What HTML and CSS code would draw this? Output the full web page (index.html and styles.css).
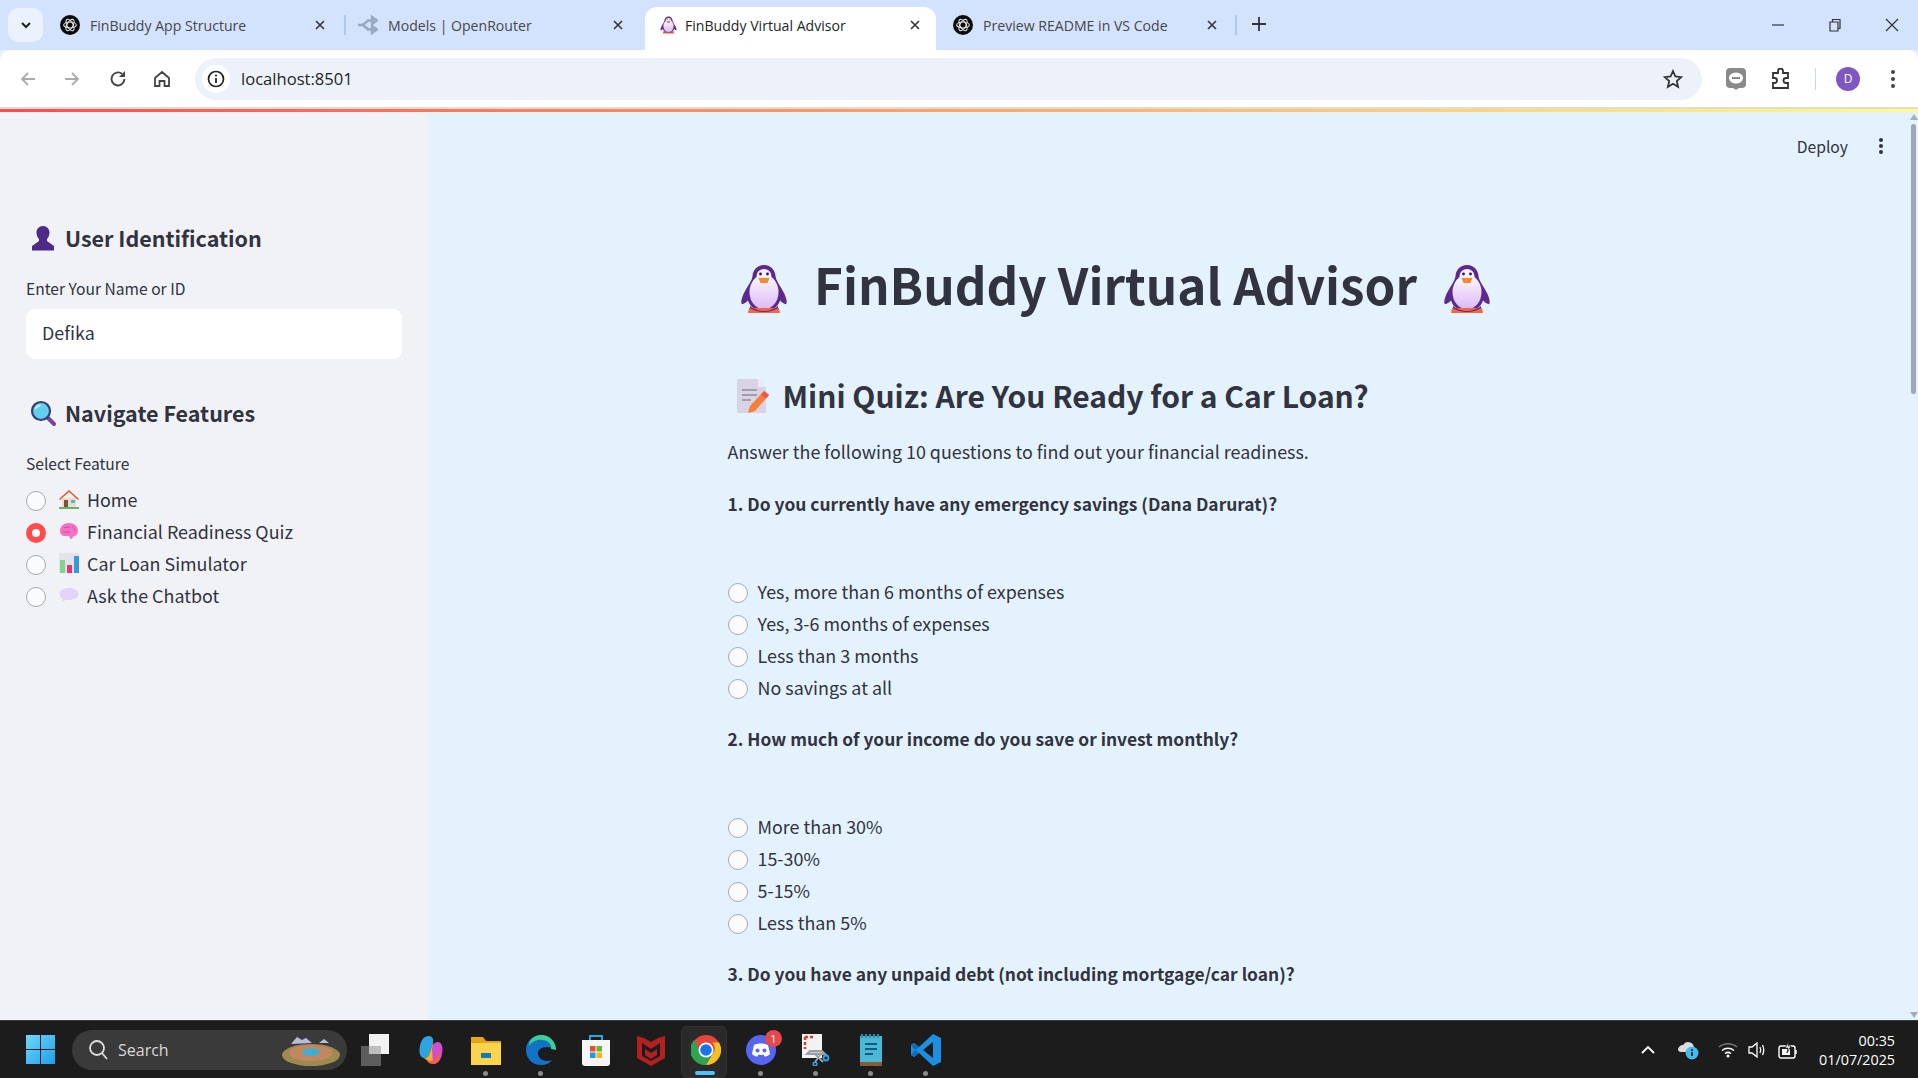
FILE: index.html
```html
<!DOCTYPE html>
<html lang="en">
<head>
    <meta charset="UTF-8">
    <meta name="viewport" content="width=device-width, initial-scale=1.0">
    <title>FinBuddy Virtual Advisor</title>
    <link rel="stylesheet" href="styles.css">
</head>
<body>
    <svg class="defs" width="0" height="0">
        <defs>
            <linearGradient id="win" x1="0" y1="0" x2="1" y2="1">
                <stop offset="0" stop-color="#6fd8fb"/>
                <stop offset="1" stop-color="#1e9fe8"/>
            </linearGradient>
            <linearGradient id="belly" x1="0" y1="0" x2="0" y2="1">
                <stop offset="0" stop-color="#fdfaff"/>
                <stop offset="1" stop-color="#dcb9f7"/>
            </linearGradient>
            <symbol id="gpt" viewBox="0 0 20 20">
                <circle cx="10" cy="10" r="10" fill="#0b0b0b"/>
                <g fill="none" stroke="#e8e8e8" stroke-width="1.1">
                    <ellipse cx="10" cy="10" rx="6.3" ry="3"/>
                    <ellipse cx="10" cy="10" rx="6.3" ry="3" transform="rotate(60 10 10)"/>
                    <ellipse cx="10" cy="10" rx="6.3" ry="3" transform="rotate(120 10 10)"/>
                </g>
            </symbol>
            <symbol id="penguin" viewBox="0 0 48 48">
                <path d="M24 0c-7 0-11 5-11.500 11C12 16 8 20 4 28c-2.500 5-3.500 10-2 11 1 .6 3.500-1 6-3.500C10 42 16 46 24 46s14-4 16-10.500c2.500 2.500 5 4.100 6 3.500 1.500-1 .5-6-2-11-4-8-8-12-8.500-17C35 5 31 0 24 0z" fill="#5b2a8c"/>
                <ellipse cx="24" cy="27" rx="14.500" ry="17.500" fill="url(#belly)"/>
                <ellipse cx="24" cy="11" rx="7.500" ry="7" fill="#f7effd"/>
                <circle cx="20.500" cy="9" r="1.400" fill="#2b1a3d"/>
                <circle cx="27.500" cy="9" r="1.400" fill="#2b1a3d"/>
                <path d="M18.500 13h11l-2 5h-7z" fill="#f58a2c"/>
                <path d="M9 43h30l1 5H8z" fill="#f4683c"/>
                <path d="M10 41c4 3.500 9 5 14 5s10-1.500 14-5v2c-4 2.500-9 4-14 4s-10-1.500-14-4z" fill="#5b2a8c"/>
            </symbol>
            <symbol id="close" viewBox="0 0 10 10">
                <path d="M1 1l8 8M9 1L1 9" stroke="#333" stroke-width="1.600"/>
            </symbol>
        </defs>
    </svg>

    <div class="tabstrip">
        <button class="tab-search">
            <svg width="14" height="14" viewBox="0 0 14 14"><path d="M3 5l4 4 4-4" fill="none" stroke="#1f1f1f" stroke-width="2"/></svg>
        </button>
        <div class="tab tab-first">
            <svg class="favicon" width="20" height="20"><use href="#gpt"/></svg>
            <span class="tab-title">FinBuddy App Structure</span>
            <svg class="tab-close" width="10" height="10"><use href="#close"/></svg>
        </div>
        <span class="tab-sep"></span>
        <div class="tab tab-second">
            <svg class="favicon" width="21" height="20" viewBox="0 0 21 20"><path d="M1 10h5l5-4.500h4M6 10l5 4.500h4M15 2l5 3.500-5 3.500zM15 11l5 3.500-5 3.500z" fill="#9aa9bd" stroke="#9aa9bd" stroke-width="2.400"/></svg>
            <span class="tab-title">Models | OpenRouter</span>
            <svg class="tab-close" width="10" height="10"><use href="#close"/></svg>
        </div>
        <div class="tab tab-active">
            <svg class="favicon" width="17" height="20"><use href="#penguin"/></svg>
            <span class="tab-title">FinBuddy Virtual Advisor</span>
            <svg class="tab-close" width="10" height="10"><use href="#close"/></svg>
        </div>
        <div class="tab tab-fourth">
            <svg class="favicon" width="20" height="20"><use href="#gpt"/></svg>
            <span class="tab-title">Preview README in VS Code</span>
            <svg class="tab-close" width="10" height="10"><use href="#close"/></svg>
        </div>
        <span class="tab-sep"></span>
        <svg class="tab-new" width="16" height="16" viewBox="0 0 16 16"><path d="M8 1v14M1 8h14" stroke="#333" stroke-width="1.800"/></svg>
        <div class="window-controls">
            <svg width="14" height="14" viewBox="0 0 14 14"><path d="M1 7h12" stroke="#333" stroke-width="1.200"/></svg>
            <svg width="14" height="14" viewBox="0 0 14 14"><path d="M2 4h8v9H2zM4.500 4V1.500h7.500v9H10" fill="none" stroke="#333" stroke-width="1.200"/></svg>
            <svg width="14" height="14" viewBox="0 0 14 14"><path d="M1 1l12 12M13 1L1 13" stroke="#333" stroke-width="1.200"/></svg>
        </div>
    </div>

    <div class="toolbar">
        <svg class="nav-icon nav-back" width="18" height="18" viewBox="0 0 18 18"><path d="M16 9H3M9 3L3 9l6 6" fill="none" stroke="#a9abae" stroke-width="1.800"/></svg>
        <svg class="nav-icon nav-forward" width="18" height="18" viewBox="0 0 18 18"><path d="M2 9h13M9 3l6 6-6 6" fill="none" stroke="#a9abae" stroke-width="1.800"/></svg>
        <svg class="nav-icon nav-reload" width="18" height="18" viewBox="0 0 18 18"><path d="M15.500 9A6.500 6.500 0 1 1 13 3.800" fill="none" stroke="#444" stroke-width="1.900"/><path d="M16 1v6h-6z" fill="#444"/></svg>
        <svg class="nav-icon nav-home" width="18" height="18" viewBox="0 0 18 18"><path d="M2 8l7-6 7 6v8h-4.500v-5h-5v5H2z" fill="none" stroke="#444" stroke-width="1.800"/></svg>
        <div class="omnibox">
            <span class="site-info">
                <svg width="18" height="18" viewBox="0 0 18 18"><circle cx="9" cy="9" r="7.500" fill="none" stroke="#222" stroke-width="1.700"/><path d="M9 8v5" stroke="#222" stroke-width="1.800"/><circle cx="9" cy="5.500" r="1.100" fill="#222"/></svg>
            </span>
            <span class="url">localhost:8501</span>
            <svg class="star" width="20" height="20" viewBox="0 0 20 20"><path d="M10 2l2.400 5.500 5.800.6-4.400 3.900 1.300 5.800L10 14.800l-5.100 3 1.300-5.800-4.400-3.900 5.800-.6z" fill="none" stroke="#333" stroke-width="1.800"/></svg>
        </div>
        <svg class="ext-line" width="20" height="22" viewBox="0 0 20 22"><path d="M4 0h12a4 4 0 0 1 4 4v12a4 4 0 0 1-4 4h-3l-3 2-3-2H4a4 4 0 0 1-4-4V4a4 4 0 0 1 4-4z" fill="#8a8a8a"/><ellipse cx="10" cy="10" rx="7" ry="5.500" fill="#fff"/><path d="M6 10h8" stroke="#8a8a8a" stroke-width="2"/></svg>
        <svg class="ext-puzzle" width="20" height="22" viewBox="0 0 20 22"><path d="M2 5h5V3a2.500 2.500 0 0 1 5 0v2h5v5h-2a2.500 2.500 0 0 0 0 5h2v5H2v-5h1.500a2.500 2.500 0 0 0 0-5H2z" fill="none" stroke="#333" stroke-width="1.800"/></svg>
        <span class="toolbar-sep"></span>
        <span class="avatar">D</span>
        <svg class="menu-dots" width="4" height="18" viewBox="0 0 4 18"><circle cx="2" cy="2" r="2" fill="#444"/><circle cx="2" cy="9" r="2" fill="#444"/><circle cx="2" cy="16" r="2" fill="#444"/></svg>
    </div>
    <div class="deco-line"></div>

    <div class="app">
        <aside class="sidebar">
            <h3 class="side-title">
                <svg class="side-emoji" width="26" height="26" viewBox="0 0 26 26"><path d="M13 1c-4 0-6.500 3-6.500 6.500 0 2.500 1 5 2.500 6.500v2L2 21v4.500h22V21l-7-5v-2c1.500-1.500 2.500-4 2.500-6.500C19.500 4 17 1 13 1z" fill="#4c2a85"/></svg>
                User Identification
            </h3>
            <label class="field-label" for="name">Enter Your Name or ID</label>
            <input class="name-input" id="name" type="text" value="Defika">

            <h3 class="side-title side-title-nav">
                <svg class="side-emoji" width="26" height="26" viewBox="0 0 26 26"><path d="M17 17l7 7" stroke="#7a4595" stroke-width="4" stroke-linecap="round"/><circle cx="11" cy="11" r="9" fill="#5fd0ee" stroke="#3a3f78" stroke-width="2.200"/><path d="M5.500 9c1-2.500 3-3.500 5-3.500" fill="none" stroke="#c4f0fb" stroke-width="1.800"/></svg>
                Navigate Features
            </h3>
            <div class="field-label field-label-nav">Select Feature</div>
            <div class="radio-list">
                <div class="radio-row">
                    <span class="radio"></span>
                    <svg class="row-emoji" width="20" height="20" viewBox="0 0 20 20"><path d="M3 9h14v9H3z" fill="#efdcc6"/><path d="M0 10L10 1l10 9-1 1-9-8-9 8z" fill="#e2572b"/><path d="M5 11h4v7H5z" fill="#7a5443"/><path d="M12 11h4v3h-4z" fill="#4db3e6"/><path d="M0 18h20v2H0z" fill="#58b96a"/></svg>
                    <span>Home</span>
                </div>
                <div class="radio-row">
                    <span class="radio radio-on"></span>
                    <svg class="row-emoji" width="20" height="20" viewBox="0 0 20 20"><path d="M1 10c0-5 4-8 9-8 5 0 9 3 9 8 0 3-2 5-4 5-1 0-1 3-3 3-1 0-1-2-2-3H6c-3 0-5-2-5-5z" fill="#f472c4"/><path d="M5 7c2-2 4 0 6-1M4 11c2-1 4 1 7 0M13 5c1 2 3 2 3 5" fill="none" stroke="#c84a9f" stroke-width="1"/></svg>
                    <span>Financial Readiness Quiz</span>
                </div>
                <div class="radio-row">
                    <span class="radio"></span>
                    <svg class="row-emoji" width="20" height="20" viewBox="0 0 20 20"><path d="M0 0h20v20H0z" fill="#e3e1ea"/><path d="M1 7h5v13H1z" fill="#7cd68c"/><path d="M8 12h5v8H8z" fill="#e8356f"/><path d="M15 3h5v17h-5z" fill="#3a97dd"/></svg>
                    <span>Car Loan Simulator</span>
                </div>
                <div class="radio-row">
                    <span class="radio"></span>
                    <svg class="row-emoji" width="20" height="20" viewBox="0 0 20 20"><path d="M10 3c5.500 0 9.500 2.500 9.500 6s-4 6-9.500 6c-1 0-2-.1-3-.3L3 17l.8-3.500C1.500 12.500.5 11 .5 9 .5 5.500 4.500 3 10 3z" fill="#e2d4f7"/></svg>
                    <span>Ask the Chatbot</span>
                </div>
            </div>
        </aside>

        <main class="main">
            <div class="main-head">
                <span class="deploy">Deploy</span>
                <svg width="4" height="16" viewBox="0 0 4 16"><circle cx="2" cy="2" r="2" fill="#31333f"/><circle cx="2" cy="8" r="2" fill="#31333f"/><circle cx="2" cy="14" r="2" fill="#31333f"/></svg>
            </div>
            <div class="content">
                <h1 class="page-title">
                    <svg width="48" height="48"><use href="#penguin"/></svg>
                    <span>FinBuddy Virtual Advisor</span>
                    <svg width="48" height="48"><use href="#penguin"/></svg>
                </h1>
                <h2 class="quiz-title">
                    <svg width="33" height="35" viewBox="0 0 33 35"><path d="M1 1h21l8 8v26H1z" fill="#d9d3e6"/><path d="M22 1l8 8h-8z" fill="#efeaf5"/><path d="M6 12h15M6 17h15M6 22h9" stroke="#8f8a9c" stroke-width="1.500"/><path d="M28 13l5 4-14 16-7 2 2-7z" fill="#f4803a"/><path d="M28 13l5 4-3 3.500-5-4z" fill="#f0554d"/></svg>
                    Mini Quiz: Are You Ready for a Car Loan?
                </h2>
                <p class="intro">Answer the following 10 questions to find out your financial readiness.</p>

                <div class="question">1. Do you currently have any emergency savings (Dana Darurat)?</div>
                <div class="radio-list options">
                    <div class="radio-row"><span class="radio"></span><span>Yes, more than 6 months of expenses</span></div>
                    <div class="radio-row"><span class="radio"></span><span>Yes, 3-6 months of expenses</span></div>
                    <div class="radio-row"><span class="radio"></span><span>Less than 3 months</span></div>
                    <div class="radio-row"><span class="radio"></span><span>No savings at all</span></div>
                </div>

                <div class="question">2. How much of your income do you save or invest monthly?</div>
                <div class="radio-list options">
                    <div class="radio-row"><span class="radio"></span><span>More than 30%</span></div>
                    <div class="radio-row"><span class="radio"></span><span>15-30%</span></div>
                    <div class="radio-row"><span class="radio"></span><span>5-15%</span></div>
                    <div class="radio-row"><span class="radio"></span><span>Less than 5%</span></div>
                </div>

                <div class="question">3. Do you have any unpaid debt (not including mortgage/car loan)?</div>
            </div>
        </main>

        <div class="scrollbar">
            <span class="arrow-up"></span>
            <span class="thumb"></span>
            <span class="arrow-down"></span>
        </div>
    </div>

    <footer class="taskbar">
        <svg class="start" width="29" height="29" viewBox="0 0 30 30"><path d="M0 0h14.500v14.500H0zM15.500 0H30v14.500H15.500zM0 15.500h14.500V30H0zM15.500 15.500H30V30H15.500z" fill="url(#win)"/></svg>
        <div class="search-pill">
            <svg width="20" height="22" viewBox="0 0 20 22"><circle cx="9" cy="9" r="7" fill="none" stroke="#ddd" stroke-width="1.800"/><path d="M14 14l5 6" stroke="#ddd" stroke-width="1.800"/></svg>
            <span>Search</span>
            <svg class="search-art" width="60" height="32" viewBox="0 0 60 32"><path d="M10 10l6-7 5 3 4-2 6 5zM38 9l5-4 5 4z" fill="#b7bdd8"/><ellipse cx="30" cy="21" rx="29" ry="11" fill="#9c8a4f"/><ellipse cx="30" cy="19" rx="22" ry="8" fill="#c08760"/><ellipse cx="30" cy="18" rx="9" ry="3.500" fill="#36b0dc"/></svg>
        </div>
        <div class="task-icons">
            <div class="task-icon">
                <svg width="30" height="32" viewBox="0 0 30 32"><path d="M0 12h20v20H0z" fill="#5d5d5d"/><path d="M8 0h20v20H8z" fill="#f2f2f2"/><path d="M8 12h12v8H8z" fill="#bdbdbd"/></svg>
            </div>
            <div class="task-icon">
                <svg width="28" height="30" viewBox="0 0 28 30"><path d="M12 1c-5 0-8 4-9 10-1 5-1 11 4 12 3 .5 5-2 6-6l3-9c1-4-1-7-4-7z" fill="#2fa4e0"/><path d="M7 23c3 .5 5-2 6-6l3-9 4 14c-3 6-9 5-13 1z" fill="#f4b32c"/><path d="M16 29c5 0 8-4 9-10 1-5 1-11-4-12-3-.5-5 2-6 6z" fill="#d14dce"/><path d="M16 29c-3 0-6-2-7-5 4 3 9 3 11-3l4-3c-1 6-3 11-8 11z" fill="#f0614a"/></svg>
            </div>
            <div class="task-icon task-open">
                <svg width="30" height="30" viewBox="0 0 30 30"><path d="M0 2h12l3 4h15v24H0z" fill="#e9a70f"/><path d="M0 8h30v22H0z" fill="#fcd34d"/><path d="M10 18h10v5H10z" fill="#0f7ac4"/></svg>
            </div>
            <div class="task-icon task-open">
                <svg width="30" height="30" viewBox="0 0 30 30"><path d="M15 0C6 0 0 7 0 15c0 9 7 15 15 15 5 0 9-2 11-5-5 2-13 1-14-6-.5-4 3-7 9-7 5 0 9 3 9 3C30 6 23 0 15 0z" fill="#1173c7"/><path d="M15 0C8 0 3 5 3 11c3-5 9-7 14-6 6 1 9 5 8 9 2 0 4 1 5 1 0-9-7-15-15-15z" fill="#3ccf91"/></svg>
            </div>
            <div class="task-icon">
                <svg width="30" height="32" viewBox="0 0 30 32"><path d="M9 8V2h12v6" fill="none" stroke="#23a9e6" stroke-width="2"/><path d="M1 6h28v23a3 3 0 0 1-3 3H4a3 3 0 0 1-3-3z" fill="#f6f6f6"/><path d="M9 12h5.500v5.500H9z" fill="#e8502a"/><path d="M15.500 12H21v5.500h-5.500z" fill="#6cb32c"/><path d="M9 18.500h5.500V24H9z" fill="#1f9be8"/><path d="M15.500 18.500H21V24h-5.500z" fill="#f7b51a"/></svg>
            </div>
            <div class="task-icon">
                <svg width="28" height="32" viewBox="0 0 28 32"><path d="M0 2l7 2 7 4 7-4 7-2v22l-14 8L0 24z" fill="#b0211f"/><path d="M5 9l9 6 9-6v13l-9 5-9-5z" fill="#1c1c1c"/><path d="M8 15l6 4 6-4v6l-6 4-6-4z" fill="#b0211f"/></svg>
            </div>
            <div class="task-icon task-active">
                <svg width="30" height="30" viewBox="0 0 30 30"><circle cx="15" cy="15" r="15" fill="#e6463c"/><path d="M28 7.500A15 15 0 0 1 15 30l6.500-11a7.500 7.500 0 0 0-.5-11.500z" fill="#f6c026"/><path d="M15 30A15 15 0 0 1 3 5l6.500 11A7.500 7.500 0 0 0 21.500 19L15 30z" fill="#2ea44f"/><circle cx="15" cy="15" r="7.500" fill="#fff"/><circle cx="15" cy="15" r="5.800" fill="#1a73e8"/></svg>
            </div>
            <div class="task-icon task-open">
                <svg width="30" height="30" viewBox="0 0 30 30"><circle cx="15" cy="15" r="15" fill="#5865f2"/><path d="M8 10c4-2 10-2 14 0l2 9c-2 2-4 2.500-5.500 2.500l-1-2c-2 .5-3 .5-5 0l-1 2C10 21.500 8 21 6 19z" fill="#fff"/><circle cx="11.500" cy="15.500" r="2" fill="#5865f2"/><circle cx="18.500" cy="15.500" r="2" fill="#5865f2"/></svg>
                <span class="badge">1</span>
            </div>
            <div class="task-icon task-open">
                <svg width="30" height="32" viewBox="0 0 30 32"><path d="M1 0h20v24H1z" fill="#f2f2f2"/><path d="M4 3h9M4 3v12" fill="none" stroke="#d1402c" stroke-width="2.500" stroke-dasharray="3 2"/><path d="M6 20h18l-3-3H9zM14 20l8 8M20 20l-6 8" stroke="#9aa0a6" stroke-width="2" fill="#c7c7c7"/><circle cx="25" cy="24" r="2.500" fill="none" stroke="#2aa6ec" stroke-width="1.800"/><circle cx="14" cy="30" r="1.800" fill="none" stroke="#2aa6ec" stroke-width="1.600"/></svg>
            </div>
            <div class="task-icon task-open">
                <svg width="24" height="32" viewBox="0 0 24 32"><path d="M1 2h22v30H1z" fill="#4cb8d8"/><path d="M1 28h22v4H1z" fill="#8a5a36"/><path d="M6 10h12M6 15h12M6 20h8" stroke="#0d5a7a" stroke-width="2.200"/><path d="M3 0v4M7 0v4M11 0v4M15 0v4M19 0v4" stroke="#2d8fb0" stroke-width="2"/></svg>
            </div>
            <div class="task-icon task-open">
                <svg width="30" height="32" viewBox="0 0 30 32"><path d="M22 0l8 4v24l-8 4L8 19l-5 4-3-2v-10l3-2 5 4z" fill="#1e8fe0"/><path d="M22 8L12 16l10 8z" fill="#1c1c1c"/><path d="M0 11l3-2 5 4-4 3zM0 21l3 2 5-4-4-3z" fill="#0f6db3"/></svg>
            </div>
        </div>
        <div class="tray">
            <svg class="tray-caret" width="16" height="10" viewBox="0 0 16 10"><path d="M2 8l6-6 6 6" fill="none" stroke="#fff" stroke-width="1.800"/></svg>
            <svg class="tray-cloud" width="22" height="20" viewBox="0 0 22 20"><path d="M1 10a5 5 0 0 1 5-5 6 6 0 0 1 11 2v5H4a3 3 0 0 1-3-2z" fill="#dcdcdc"/><circle cx="15" cy="13" r="6.500" fill="#45b9f2"/><path d="M15 12v4" stroke="#111" stroke-width="1.500"/><circle cx="15" cy="10" r="1" fill="#111"/></svg>
            <svg class="tray-wifi" width="20" height="16" viewBox="0 0 20 16"><path d="M1 5c5-4.500 13-4.500 18 0" fill="none" stroke="#777" stroke-width="1.500"/><path d="M4 8.500c3.500-3 8.500-3 12 0M7 11.500c2-1.500 4-1.500 6 0" fill="none" stroke="#fff" stroke-width="1.500"/><circle cx="10" cy="14" r="1.500" fill="#fff"/></svg>
            <svg class="tray-sound" width="20" height="16" viewBox="0 0 20 16"><path d="M1 5h3l5-4v14l-5-4H1z" fill="none" stroke="#fff" stroke-width="1.300"/><path d="M12 5c1 2 1 4 0 6M14.500 3c1.500 3 1.500 7 0 10" fill="none" stroke="#fff" stroke-width="1.300"/></svg>
            <svg class="tray-battery" width="20" height="18" viewBox="0 0 20 18"><path d="M3 5h12a2 2 0 0 1 2 2v8a2 2 0 0 1-2 2H3a2 2 0 0 1-2-2V7a2 2 0 0 1 2-2z" fill="none" stroke="#fff" stroke-width="1.400"/><path d="M18 9v4" stroke="#fff" stroke-width="1.500"/><path d="M4 8h8v6H4z" fill="#fff"/><path d="M11 0L7 7h3l-1 5 4-7h-3z" fill="#fff" stroke="#1c1c1c" stroke-width=".8"/></svg>
            <div class="clock">
                <span>00:35</span>
                <span>01/07/2025</span>
            </div>
        </div>
    </footer>
</body>
</html>
```

FILE: styles.css
```css
* {
    box-sizing: border-box;
}

html, body {
    margin: 0;
    padding: 0;
    height: 100%;
    overflow: hidden;
}

body {
    display: flex;
    flex-direction: column;
    font-family: "Noto Sans CJK SC", "Noto Sans", sans-serif;
    color: #31333f;
    background-color: #e3f2fd;
}

.defs {
    position: absolute;
}

/* browser tabs */
.tabstrip {
    height: 50px;
    flex: none;
    display: flex;
    align-items: flex-end;
    background-color: #d3e3fd;
    padding-left: 8px;
    font-family: "Open Sans", sans-serif;
    font-size: 14.1px;
}

.tab-search {
    width: 35px;
    height: 34px;
    margin-bottom: 8px;
    border: none;
    border-radius: 10px;
    background-color: #ecf2fd;
    padding: 0;
    display: flex;
    align-items: center;
    justify-content: center;
}

.tab {
    height: 43px;
    display: flex;
    align-items: center;
    color: #474747;
    padding-bottom: 7px;
}

.tab-title {
    white-space: nowrap;
    flex: 1;
}

.tab-close {
    flex: none;
}

.tab-first {
    width: 284px;
    margin-left: 17px;
}

.tab-first .favicon,
.tab-second .favicon,
.tab-fourth .favicon {
    margin-right: 10px;
}

.tab-second {
    width: 280px;
    margin-left: 11px;
}

.tab-active {
    width: 291px;
    margin-left: 8px;
    padding-left: 15px;
    padding-right: 16px;
    background-color: #fff;
    border-radius: 12px 12px 0 0;
    color: #1f1f1f;
}

.tab-active .favicon {
    margin-right: 8px;
}

.tab-fourth {
    width: 282px;
    margin-left: 17px;
}

.tab-first .tab-close {
    margin-right: 19px;
}

.tab-second .tab-close {
    margin-right: 14px;
}

.tab-fourth .tab-close {
    margin-right: 18px;
}

.tab-sep {
    width: 2px;
    height: 20px;
    margin-bottom: 15px;
    background-color: #a8c7fa;
}

.tab-new {
    margin: 0 0 18px 14px;
}

.window-controls {
    margin-left: auto;
    width: 147px;
    height: 50px;
    display: flex;
    align-items: center;
    gap: 43px;
}

/* address bar */
.toolbar {
    height: 57px;
    flex: none;
    display: flex;
    align-items: center;
    background-color: #fff;
    border-radius: 10px 10px 0 0;
    font-family: "Open Sans", sans-serif;
}

.nav-back {
    margin-left: 19px;
}

.nav-forward {
    margin-left: 26px;
}

.nav-reload {
    margin-left: 28px;
}

.nav-home {
    margin-left: 26px;
}

.omnibox {
    width: 1507px;
    height: 42px;
    margin-left: 24px;
    border-radius: 21px;
    background-color: #edf2fa;
    display: flex;
    align-items: center;
    padding-left: 7px;
    padding-right: 19px;
}

.site-info {
    width: 28px;
    height: 28px;
    border-radius: 50%;
    background-color: #fff;
    display: flex;
    align-items: center;
    justify-content: center;
}

.url {
    margin-left: 11px;
    font-size: 16.6px;
    color: #1f1f1f;
    flex: 1;
}

.ext-line {
    margin-left: 24px;
}

.ext-puzzle {
    margin-left: 25px;
}

.toolbar-sep {
    width: 1px;
    height: 22px;
    margin-left: 24px;
    background-color: #c7d7f0;
}

.avatar {
    width: 24px;
    height: 24px;
    margin-left: 20px;
    border-radius: 50%;
    background-color: #7e57c2;
    color: #fff;
    font-size: 12px;
    display: flex;
    align-items: center;
    justify-content: center;
}

.menu-dots {
    margin-left: 31px;
}

.deco-line {
    height: 5px;
    flex: none;
    border-top: 2px solid #dadce0;
    background: linear-gradient(90deg, #ff4b4b, #fffd80);
    background-origin: border-box;
}

/* page */
.app {
    flex: 1;
    min-height: 0;
    display: flex;
}

.sidebar {
    width: 428px;
    flex: none;
    padding: 109px 26px 0;
    background-color: #f0f2f6;
}

.side-title {
    margin: 0;
    height: 34px;
    display: flex;
    align-items: center;
    font-size: 21.5px;
    font-weight: 600;
    line-height: 34px;
}

.side-title-nav {
    margin-top: 37px;
}

.side-emoji {
    margin: 0 9px 0 4px;
    flex: none;
}

.field-label {
    display: block;
    margin-top: 23px;
    font-size: 15.6px;
    line-height: 20px;
}

.name-input {
    display: block;
    width: 100%;
    height: 50px;
    margin-top: 11px;
    padding: 0 16px 4px;
    border: none;
    border-radius: 9px;
    background-color: #fff;
    font-family: inherit;
    font-size: 17.9px;
    color: #31333f;
}

.radio-list {
    margin-top: 11px;
}

.radio-row {
    height: 32px;
    padding-bottom: 2px;
    display: flex;
    align-items: center;
    font-size: 17.9px;
}

.radio {
    width: 20px;
    height: 20px;
    flex: none;
    margin: 4px 10px 0 0;
    border-radius: 50%;
    border: 1.5px solid #a5a9b3;
    background-color: #fafbfd;
}

.radio-on {
    border: 6px solid #ff4b4b;
    background-color: #fff;
}

.row-emoji {
    flex: none;
    margin: 0 8px 0 3px;
}

.main {
    flex: 1;
    min-width: 0;
    overflow: hidden;
    background-color: #e3f2fd;
}

.main-head {
    height: 70px;
    padding: 0 26px 2px 0;
    display: flex;
    align-items: center;
    justify-content: flex-end;
    gap: 31px;
}

.deploy {
    font-size: 15.7px;
}

.content {
    width: 776px;
    margin-left: 299.5px;
}

.page-title {
    margin: 70px 0 0;
    height: 70px;
    display: flex;
    align-items: center;
    justify-content: center;
    gap: 26px;
    font-size: 49.4px;
    font-weight: 700;
    line-height: 70px;
    white-space: nowrap;
}

.page-title span {
    padding-bottom: 7px;
}

.page-title svg {
    margin-top: 4px;
}

.quiz-title {
    margin: 51px 0 0;
    height: 44px;
    display: flex;
    align-items: center;
    gap: 14px;
    padding-left: 8px;
    font-size: 30px;
    font-weight: 600;
    line-height: 44px;
}

.intro {
    margin: 20px 0 25px;
    font-size: 17.9px;
    line-height: 28px;
}

.question {
    font-size: 17.4px;
    font-weight: 600;
    line-height: 28px;
}

.options {
    margin: 58px 0 21px;
}

/* fake window scrollbar */
.scrollbar {
    width: 9px;
    flex: none;
    display: flex;
    flex-direction: column;
    align-items: center;
    background-color: #e3f2fd;
    padding: 2px 0;
}

.arrow-up {
    border-left: 4px solid transparent;
    border-right: 4px solid transparent;
    border-bottom: 6px solid #a6adb8;
}

.thumb {
    width: 5px;
    height: 270px;
    margin-top: 4px;
    border-radius: 3px;
    background-color: #a0a7b1;
}

.arrow-down {
    margin-top: auto;
    border-left: 4px solid transparent;
    border-right: 4px solid transparent;
    border-top: 6px solid #a6adb8;
}

/* windows taskbar */
.taskbar {
    height: 58px;
    flex: none;
    display: flex;
    align-items: center;
    background-color: #1c1c1c;
    border-top: 1px solid #3a3a3a;
    padding-left: 26px;
    color: #fff;
    font-family: "Open Sans", sans-serif;
}

.search-pill {
    width: 275px;
    height: 40px;
    margin-left: 17px;
    padding-left: 16px;
    border-radius: 20px;
    background-color: #3a3a3a;
    display: flex;
    align-items: center;
    gap: 10px;
    font-size: 16px;
    color: #d8d8d8;
}

.search-art {
    margin-left: auto;
    margin-right: 6px;
}

.task-icons {
    display: flex;
    margin-left: 1px;
}

.task-icon {
    width: 55px;
    height: 56px;
    display: flex;
    align-items: center;
    justify-content: center;
    position: relative;
}

.task-icon svg {
    position: relative;
}

.task-open::after {
    content: "";
    position: absolute;
    left: 25px;
    bottom: 2px;
    width: 5px;
    height: 5px;
    border-radius: 50%;
    background-color: #8b8b8b;
}

.task-active::before {
    content: "";
    position: absolute;
    left: 3px;
    top: 4px;
    width: 44px;
    height: 50px;
    border: 1px solid #333;
    border-radius: 6px;
    background-color: #2a2a2a;
}

.task-active::after {
    content: "";
    position: absolute;
    left: 17px;
    bottom: 3px;
    width: 20px;
    height: 4px;
    border-radius: 2px;
    background-color: #4cc2ff;
}

.badge {
    position: absolute;
    top: 8px;
    right: 6px;
    width: 17px;
    height: 17px;
    border-radius: 50%;
    background-color: #e5484d;
    font-size: 11px;
    line-height: 17px;
    text-align: center;
    color: #fff;
}

.tray {
    margin-left: auto;
    padding-right: 23px;
    display: flex;
    align-items: center;
}

.tray-cloud {
    margin-left: 21px;
}

.tray-wifi {
    margin-left: 19px;
}

.tray-sound {
    margin-left: 10px;
}

.tray-battery {
    margin-left: 10px;
}

.clock {
    margin-left: 21px;
    display: flex;
    flex-direction: column;
    align-items: flex-end;
    font-size: 14.3px;
    line-height: 19px;
    color: #fff;
}
```
